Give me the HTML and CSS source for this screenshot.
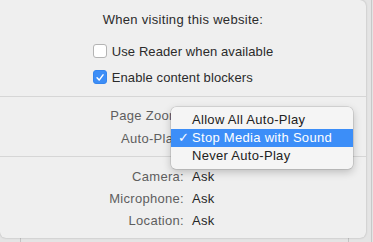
FILE: index.html
```html
<!DOCTYPE html>
<html>
<head>
<meta charset="utf-8">
<link rel="stylesheet" href="styles.css">
</head>
<body>
<div class="backdrop">
  <div class="popover">
    <div class="section top">
      <div class="title">When visiting this website:</div>
      <div class="checks">
        <label class="check"><span class="box"></span>Use Reader when available</label>
        <label class="check"><span class="box on"><svg viewBox="0 0 13 13" width="13" height="13"><path d="M3.3 6.8 L5.6 9.3 L9.8 3.6" fill="none" stroke="#fff" stroke-width="1.6" stroke-linecap="round" stroke-linejoin="round"/></svg></span>Enable content blockers</label>
      </div>
    </div>
    <div class="section mid">
      <div class="under">
        <div class="clip"><span>Page Zoom:</span></div>
        <div class="clip"><span>Auto-Play:</span></div>
      </div>
    </div>
    <div class="section bottom">
      <div class="grid">
        <div class="lbl">Camera:</div><div class="val">Ask</div>
        <div class="lbl">Microphone:</div><div class="val">Ask</div>
        <div class="lbl">Location:</div><div class="val">Ask</div>
      </div>
    </div>
    <div class="menu">
      <div class="item">Allow All Auto-Play</div>
      <div class="item sel"><span class="tick">✓</span>Stop Media with Sound</div>
      <div class="item">Never Auto-Play</div>
    </div>
  </div>
</div>
</body>
</html>
```
FILE: styles.css
```css
html, body { margin: 0; padding: 0; }
body {
  width: 373px; height: 242px; overflow: hidden;
  background: #dedede;
  font-family: "Liberation Sans", Arial, sans-serif;
  font-size: 13px;
  letter-spacing: 0.3px;
  color: #262626;
}
.backdrop {
  position: relative;
  width: 373px; height: 242px;
  background:
    linear-gradient(#c8c8c8, #c8c8c8) 371px 0 / 1px 242px no-repeat,
    linear-gradient(#c4c4c4, #c4c4c4) 20px 238px / 1px 4px no-repeat,
    linear-gradient(#c4c4c4, #c4c4c4) 348px 238px / 1px 4px no-repeat,
    #e4e4e4;
}
.popover {
  position: relative;
  width: 366px; height: 238px;
  background: #efefef;
  border-radius: 0 6px 6px 6px;
  box-shadow: 0 0 2px rgba(0,0,0,0.25);
}
.section { border-bottom: 1px solid #d6d6d6; }
.section.bottom { border-bottom: none; }
.top { padding: 11px 0 6px; }
.title { text-align: center; line-height: 18px; color: #2b2b2b; }
.checks {
  display: flex; flex-direction: column; align-items: flex-start;
  width: fit-content; margin: 9px auto 0;
  letter-spacing: 0.1px;
}
.check { display: flex; align-items: center; height: 26px; color: #2b2b2b; }
.box {
  width: 12px; height: 12px; margin-right: 5px;
  border: 1px solid #b4b4b4; border-radius: 3px; background: #fff;
  display: flex; align-items: center; justify-content: center;
  box-sizing: content-box;
}
.box.on { background: #3d8ef7; border-color: #3585ee; }
.box svg { display: block; }
.mid { padding: 7px 0 6px; }
.under { display: flex; flex-direction: column; }
.clip {
  width: 171px; height: 23px; line-height: 23px;
  overflow: hidden; white-space: nowrap; color: #5e5e5e;
}
.clip span { display: block; width: 184px; text-align: right; }
.bottom { padding-top: 8px; }
.grid {
  display: grid;
  grid-template-columns: 184px auto;
  grid-auto-rows: 22px;
  column-gap: 8px;
  align-items: center;
}
.lbl { text-align: right; color: #5e5e5e; }
.val { color: #262626; }
.menu {
  position: absolute; left: 171px; top: 107px;
  width: 182px; padding: 4px 0;
  background: #f5f5f5;
  border-radius: 5px;
  box-shadow: 0 0 0 0.5px rgba(0,0,0,0.18), 0 3px 9px rgba(0,0,0,0.22);
}
.item { position: relative; height: 18px; line-height: 18px; padding-left: 21px; color: #222; white-space: nowrap; }
.item.sel { background: #3c8ef8; color: #fff; }
.tick { position: absolute; left: 7px; top: 0; font-size: 13px; letter-spacing: 0; }
```
